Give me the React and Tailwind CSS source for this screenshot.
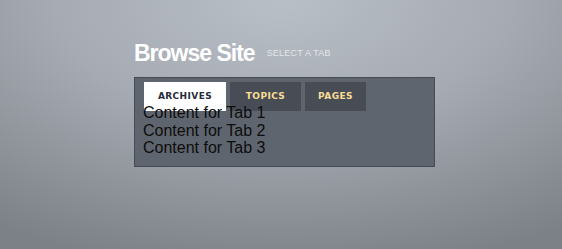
import React, { useState } from "react"

const tabs = [
    { id: "archives", label: "Archives", width: "w-[82px]" },
    { id: "topics", label: "Topics", width: "w-[71px]" },
    { id: "pages", label: "Pages", width: "w-[61px]" },
]

function App() {

    const [active, setActive] = useState("archives")

    return (
        <div className="min-h-[249px] h-[249px] overflow-hidden bg-[radial-gradient(ellipse_90%_110%_at_50%_0%,#b9bfc7_0%,#a6abb3_45%,#878c93_85%,#7c8188_100%)] font-['Liberation_Sans',Arial,sans-serif]" >
            <div className="pl-[134px] pt-[42px]" >
                <div className="flex items-center gap-[12px]" >
                    <h1 className="text-[23px] leading-[23px] font-bold tracking-[-1px] text-white" >
                        Browse Site
                    </h1>
                    <span className="text-[9px] leading-[11px] uppercase tracking-[0.2px] text-[#e2e5e9]" >
                        Select a tab
                    </span>
                </div>

                <div className="mt-[12px] w-[301px] h-[90px] border border-[#464b53] bg-[#5f656e] pt-[4px] pl-[9px]" >
                    <div className="flex gap-[4px] h-[22px]" >
                        {
                            tabs.map(t => (
                                <button
                                    key={t.id}
                                    onClick={() => setActive(t.id)}
                                    className={
                                        active === t.id
                                            ? `${t.width} h-[29px] shrink-0 bg-white text-[#262b3a] text-[9px] font-bold uppercase tracking-[0.4px] font-['DejaVu_Sans',Verdana,sans-serif]`
                                            : `${t.width} h-[29px] shrink-0 bg-[#474c55] text-[#fadc96] text-[9px] font-bold uppercase tracking-[0.4px] font-['DejaVu_Sans',Verdana,sans-serif]`
                                    }
                                >
                                    {t.label}
                                </button>
                            ))
                        }
                    </div>
                    <div className="text-[16px] leading-[17.5px] text-[#0d0d0d] -ml-px" >
                        <div>Content for Tab 1</div>
                        <div>Content for Tab 2</div>
                        <div>Content for Tab 3</div>
                    </div>
                </div>
            </div>
        </div>
    )

}

export default App
